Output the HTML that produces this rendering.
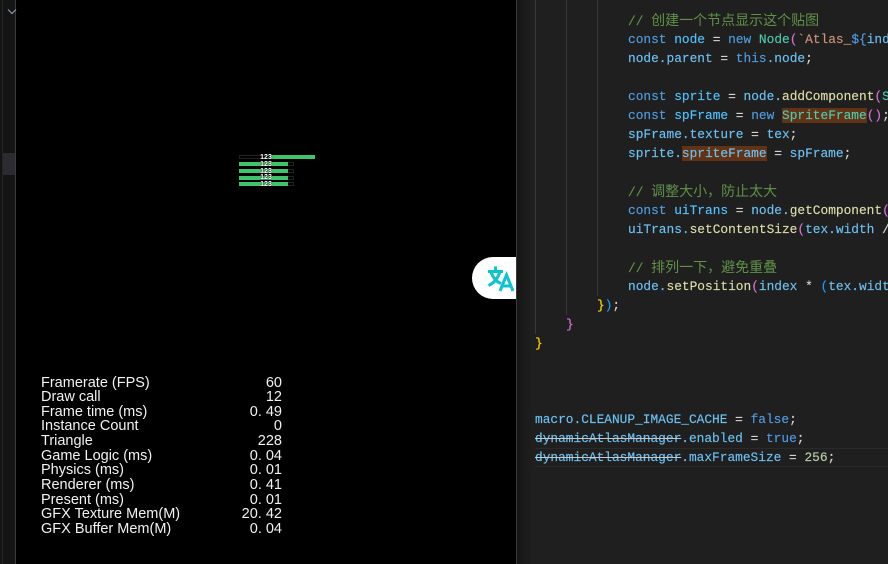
<!DOCTYPE html>
<html><head><meta charset="utf-8">
<style>
html,body{margin:0;padding:0;background:#000;width:888px;height:564px;overflow:hidden}
.a{position:absolute}
#stats div{position:absolute;left:41px;width:241px;height:15px;font:14.5px/15px "Liberation Sans",sans-serif;color:#f2f2f2;white-space:pre}
#stats span{position:absolute;right:0;top:0}
#ed{position:absolute;left:516px;top:0;width:372px;height:564px;background:#1f1f1f;overflow:hidden;border-left:1px solid #3a3a3a;box-sizing:border-box}
#grad{position:absolute;left:0;top:0;width:16px;height:564px;background:linear-gradient(90deg,#161616,#1f1f1f)}
.l{position:absolute;height:19px;font:12.83px/19px "Liberation Mono","Noto Sans CJK SC",monospace;white-space:pre;color:#6cc0f2;-webkit-text-stroke:0.15px}
.b{color:#4fc1ff}.k{color:#4f9be0}.c{color:#5f9148;top:1px}.t{color:#4ec9b0}.f{color:#dcdcaa}.w{color:#d4d4d4}.s{color:#ce9178}.p{color:#da70d6}.y{color:#ffd700}.n{color:#b5cea8}.u{color:#179fff}
.c i{font-style:normal;font-size:14px;-webkit-text-stroke:0}
.hl{background:#613214}
.g{position:absolute;width:1px;background:#383838}
.st{text-decoration:line-through;text-decoration-color:#c8c8c8}
.bar{position:absolute;background:#3fc46a;height:4px}
.bo{position:absolute;border:1px solid #222;height:2px;box-sizing:content-box}
.lab{position:absolute;left:260px;width:12px;height:6px;text-align:center;color:#fff;font:bold 7px/6px "Liberation Sans",sans-serif;text-shadow:0 0 1px #000,0 0 1px #000}
</style></head><body>
<div class="a" style="left:0;top:0;width:16px;height:564px;background:#141414"></div>
<div class="a" style="left:2px;top:0;width:1px;height:564px;background:#262626"></div>
<div class="a" style="left:15px;top:0;width:1px;height:564px;background:#3c3c3c"></div>
<div class="a" style="left:3px;top:153px;width:12px;height:22px;background:#2b2b31"></div>
<svg class="a" style="left:7px;top:8px" width="10" height="8" viewBox="0 0 10 8"><path d="M1 1.5L5 5.5L9 1.5" fill="none" stroke="#8b97a8" stroke-width="1.2"/></svg>

<div class="bo" style="left:239px;top:155px;width:31px"></div>
<div class="bar" style="left:270px;top:155px;width:45px"></div>
<div class="bo" style="left:286px;top:162px;width:6px"></div>
<div class="bo" style="left:286px;top:169px;width:6px"></div>
<div class="bo" style="left:286px;top:176px;width:6px"></div>
<div class="bo" style="left:286px;top:182px;width:6px"></div>
<div class="bar" style="left:239px;top:162px;width:49px"></div>
<div class="bar" style="left:239px;top:169px;width:49px"></div>
<div class="bar" style="left:239px;top:176px;width:49px"></div>
<div class="bar" style="left:239px;top:182px;width:49px"></div>
<div class="lab" style="top:155px">123</div>
<div class="lab" style="top:162px">123</div>
<div class="lab" style="top:169px">123</div>
<div class="lab" style="top:175px">123</div>
<div class="lab" style="top:182px">123</div>

<div id="stats">
<div style="top:376px">Framerate (FPS)<span>60</span></div>
<div style="top:390px">Draw call<span>12</span></div>
<div style="top:405px">Frame time (ms)<span>0. 49</span></div>
<div style="top:419px">Instance Count<span>0</span></div>
<div style="top:434px">Triangle<span>228</span></div>
<div style="top:449px">Game Logic (ms)<span>0. 04</span></div>
<div style="top:463px">Physics (ms)<span>0. 01</span></div>
<div style="top:478px">Renderer (ms)<span>0. 41</span></div>
<div style="top:493px">Present (ms)<span>0. 01</span></div>
<div style="top:507px">GFX Texture Mem(M)<span>20. 42</span></div>
<div style="top:522px">GFX Buffer Mem(M)<span>0. 04</span></div>
</div>

<div id="ed">
<div id="grad"></div>
<div class="g" style="left:18px;top:0;height:334px"></div>
<div class="g" style="left:49px;top:0;height:315px"></div>
<div class="g" style="left:80px;top:0;height:296px"></div>
<div class="a" style="left:18px;top:448px;width:354px;height:19px;box-sizing:border-box;border-top:1px solid #2a2a2a;border-bottom:1px solid #2a2a2a"></div>
<div class="l c" style="left:111px;top:12px">// <i>创建一个节点显示这个贴图</i></div>
<div class="l" style="left:111px;top:30px"><span class="k">const</span> <span class="b">node</span> <span class="w">=</span> <span class="k">new</span> <span class="t">Node</span><span class="p">(</span><span class="s">`Atlas_</span><span class="k">${</span>ind</div>
<div class="l" style="left:111px;top:49px">node.parent <span class="w">=</span> <span class="k">this</span>.node<span class="w">;</span></div>
<div class="l" style="left:111px;top:87px"><span class="k">const</span> <span class="b">sprite</span> <span class="w">=</span> node.<span class="f">addComponent</span><span class="p">(</span><span class="t">S</span></div>
<div class="l" style="left:111px;top:106px"><span class="k">const</span> <span class="b">spFrame</span> <span class="w">=</span> <span class="k">new</span> <span class="t hl">SpriteFrame</span><span class="p">()</span><span class="w">;</span></div>
<div class="l" style="left:111px;top:125px">spFrame.texture <span class="w">=</span> tex<span class="w">;</span></div>
<div class="l" style="left:111px;top:144px">sprite.<span class="hl">spriteFrame</span> <span class="w">=</span> spFrame<span class="w">;</span></div>
<div class="l c" style="left:111px;top:183px">// <i>调整大小，防止太大</i></div>
<div class="l" style="left:111px;top:201px"><span class="k">const</span> <span class="b">uiTrans</span> <span class="w">=</span> node.<span class="f">getComponent</span><span class="p">(</span></div>
<div class="l" style="left:111px;top:220px">uiTrans.<span class="f">setContentSize</span><span class="p">(</span>tex.width <span class="w">/</span></div>
<div class="l c" style="left:111px;top:259px">// <i>排列一下，避免重叠</i></div>
<div class="l" style="left:111px;top:277px">node.<span class="f">setPosition</span><span class="p">(</span>index <span class="w">*</span> <span class="u">(</span>tex.widt</div>
<div class="l" style="left:80px;top:296px"><span class="y">}</span><span class="u">)</span><span class="w">;</span></div>
<div class="l" style="left:49px;top:315px"><span class="p">}</span></div>
<div class="l" style="left:18px;top:334px"><span class="y">}</span></div>
<div class="l" style="left:18px;top:410px">macro.CLEANUP_IMAGE_CACHE <span class="w">=</span> <span class="k">false</span><span class="w">;</span></div>
<div class="l" style="left:18px;top:429px"><span class="st">dynamicAtlasManager</span>.enabled <span class="w">=</span> <span class="k">true</span><span class="w">;</span></div>
<div class="l" style="left:18px;top:448px"><span class="st">dynamicAtlasManager</span>.maxFrameSize <span class="w">=</span> <span class="n">256</span><span class="w">;</span></div>
</div>

<div class="a" style="left:472px;top:257px;width:44px;height:42px;background:#fff;border-radius:21px 0 0 21px"></div>
<svg class="a" style="left:486px;top:265px" width="30" height="28" viewBox="0 0 30 28"><g fill="none" stroke="#0cc3ce" stroke-width="3"><path d="M2 6.5H17"/><path d="M9.5 1.5V6.5"/><path d="M14 6.5C12 13 8 18 2.5 20.5"/><path d="M5 7C7 13 11 17 15 18.5"/><path d="M14 26L20.5 10L27 26"/><path d="M16 21H25"/></g></svg>
</body></html>
